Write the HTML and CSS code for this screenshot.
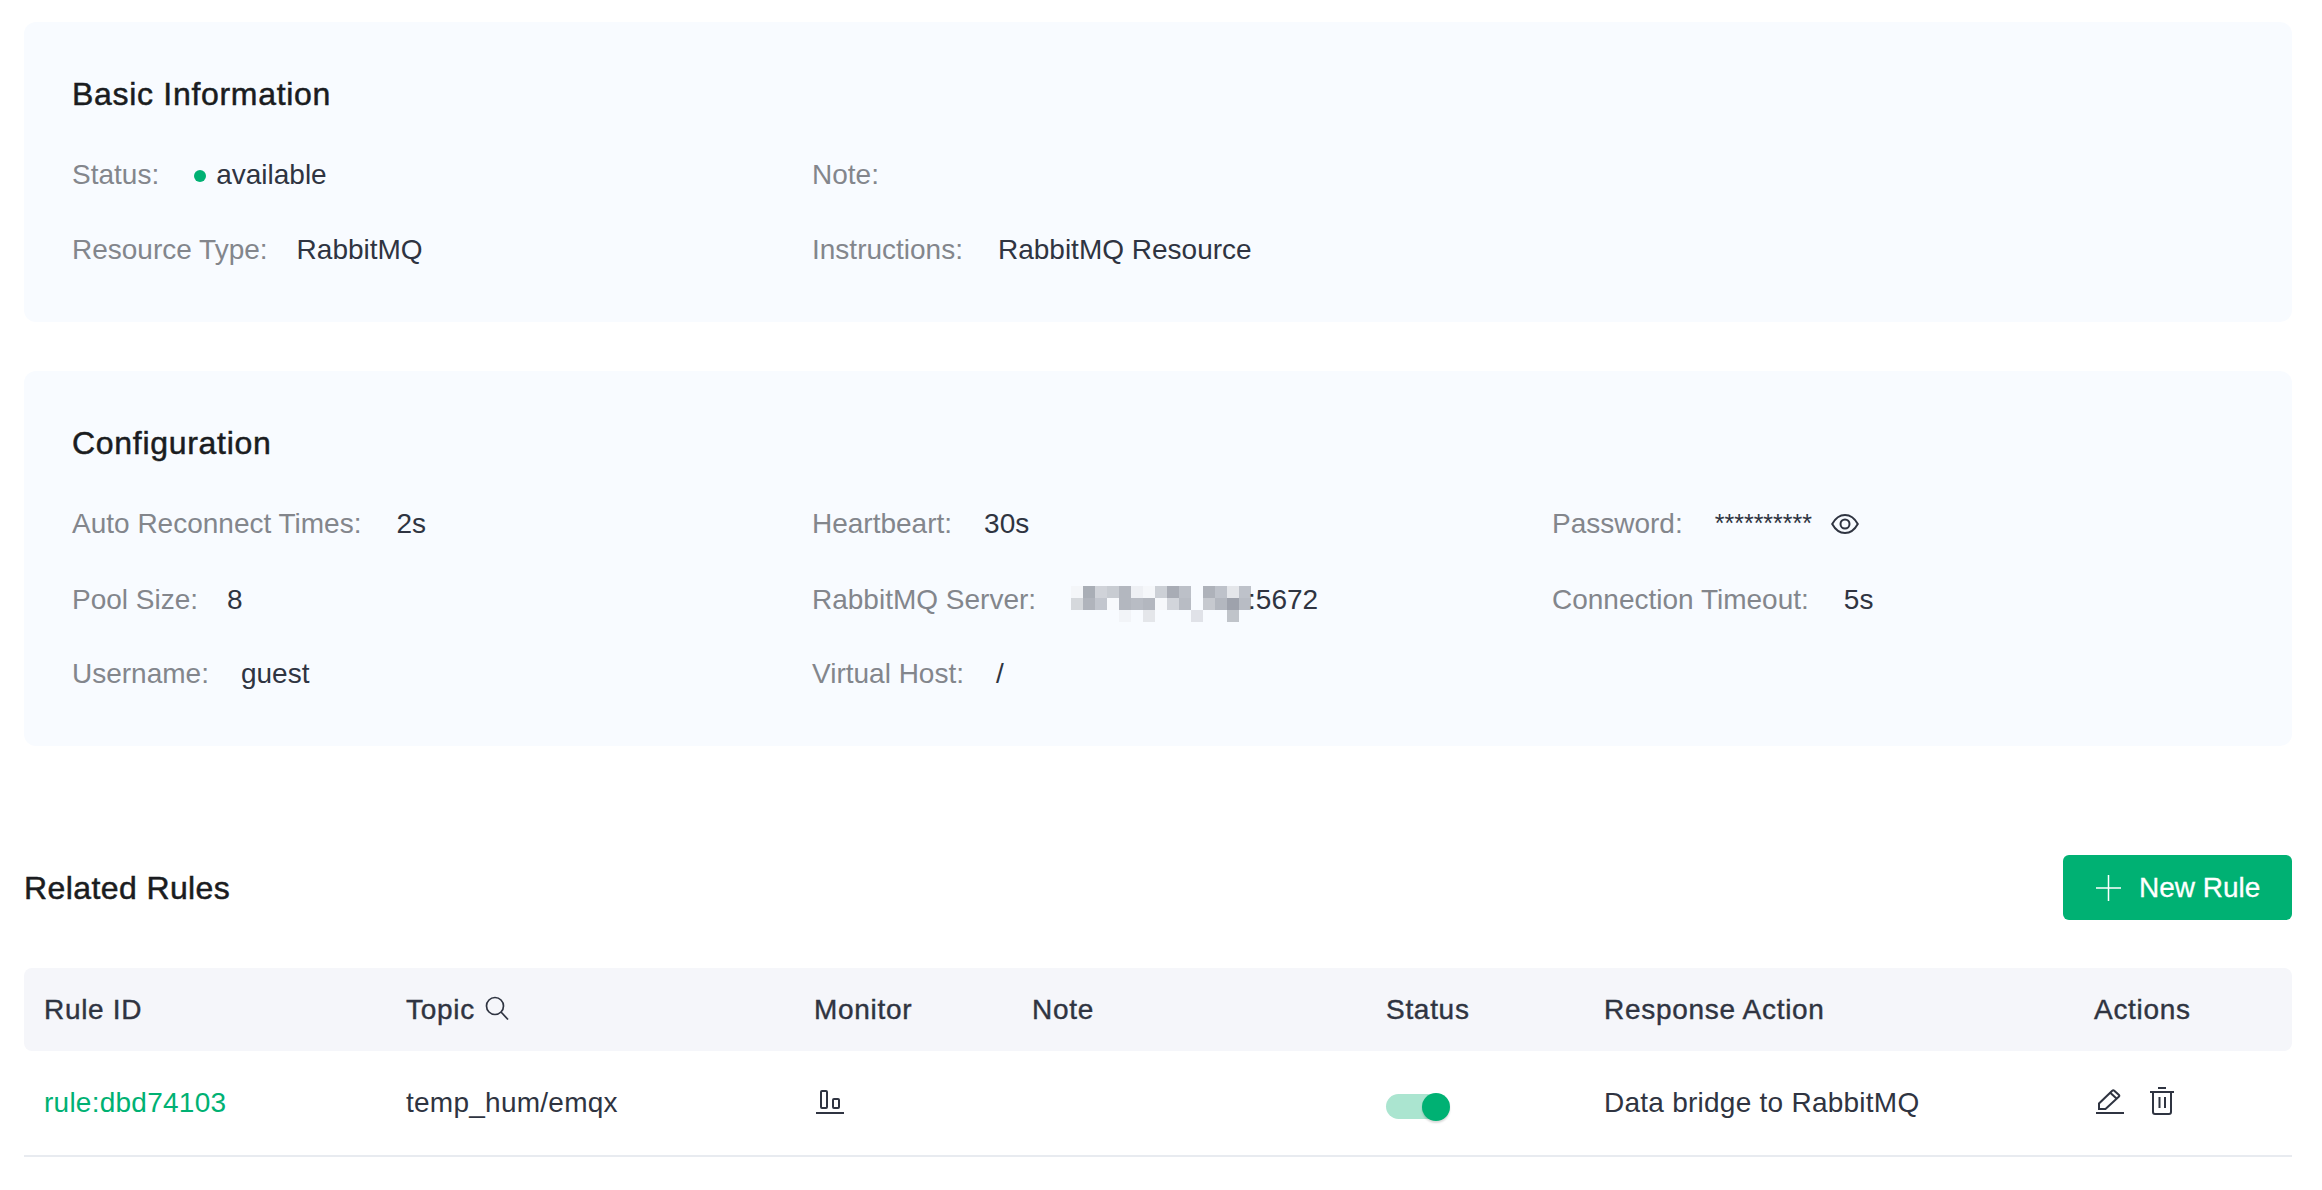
FILE: index.html
```html
<!DOCTYPE html>
<html lang="en">
<head>
  <meta charset="UTF-8">
  <title>Resource Detail</title>
  <link rel="stylesheet" href="styles.css">
</head>
<body>
  <section class="card card-basic">
    <h2 class="card-title">Basic Information</h2>
    <div class="info-grid">
      <div class="info-item"><span class="info-label label-wide">Status:</span><span class="info-value"><i class="status-dot"></i>available</span></div>
      <div class="info-item"><span class="info-label">Note:</span></div>
      <div class="info-item info-empty"></div>
      <div class="info-item"><span class="info-label label-narrow">Resource Type:</span><span class="info-value">RabbitMQ</span></div>
      <div class="info-item"><span class="info-label label-wide">Instructions:</span><span class="info-value">RabbitMQ Resource</span></div>
    </div>
  </section>

  <section class="card card-config">
    <h2 class="card-title">Configuration</h2>
    <div class="info-grid">
      <div class="info-item"><span class="info-label label-wide">Auto Reconnect Times:</span><span class="info-value">2s</span></div>
      <div class="info-item"><span class="info-label">Heartbeart:</span><span class="info-value">30s</span></div>
      <div class="info-item">
        <span class="info-label">Password:</span>
        <span class="info-value password">**********</span>
        <svg class="icon-eye" width="28" height="20" viewBox="0 0 28 20" fill="none" stroke="#2f3441" stroke-width="2">
          <path d="M1.200 10C4.500 4 9 1 14 1s9.500 3 12.800 9c-3.300 6-7.800 9-12.800 9S4.500 16 1.200 10z"/>
          <circle cx="14" cy="10" r="4.500"/>
        </svg>
      </div>
      <div class="info-item"><span class="info-label label-narrow">Pool Size:</span><span class="info-value">8</span></div>
      <div class="info-item">
        <span class="info-label">RabbitMQ Server:</span>
        <span class="info-value server">
          <svg class="mosaic" width="180" height="36" viewBox="0 0 15 3" shape-rendering="crispEdges">
            <rect x="0" y="0" width="1" height="1" fill="#f4f6f9"/><rect x="1" y="0" width="1" height="1" fill="#a9aeb6"/><rect x="2" y="0" width="1" height="1" fill="#d0d3d9"/><rect x="3" y="0" width="1" height="1" fill="#c8ccd2"/><rect x="4" y="0" width="1" height="1" fill="#b3b7bf"/><rect x="5" y="0" width="1" height="1" fill="#eef0f4"/><rect x="6" y="0" width="1" height="1" fill="#f5f7fa"/><rect x="7" y="0" width="1" height="1" fill="#ccd0d6"/><rect x="8" y="0" width="1" height="1" fill="#a8acb5"/><rect x="9" y="0" width="1" height="1" fill="#bcc0c8"/><rect x="11" y="0" width="1" height="1" fill="#aeb2ba"/><rect x="12" y="0" width="1" height="1" fill="#bec2ca"/><rect x="13" y="0" width="1" height="1" fill="#e4e6ea"/><rect x="14" y="0" width="1" height="1" fill="#bec2ca"/>
            <rect x="0" y="1" width="1" height="1" fill="#d5d8dc"/><rect x="1" y="1" width="1" height="1" fill="#b0b4bc"/><rect x="2" y="1" width="1" height="1" fill="#c2c6ce"/><rect x="3" y="1" width="1" height="1" fill="#f7f9fc"/><rect x="4" y="1" width="1" height="1" fill="#b3b7bf"/><rect x="5" y="1" width="1" height="1" fill="#b8bcc4"/><rect x="6" y="1" width="1" height="1" fill="#b3b7bf"/><rect x="7" y="1" width="1" height="1" fill="#f6f8fb"/><rect x="8" y="1" width="1" height="1" fill="#d2d5db"/><rect x="9" y="1" width="1" height="1" fill="#b8bcc4"/><rect x="11" y="1" width="1" height="1" fill="#c6c9cf"/><rect x="12" y="1" width="1" height="1" fill="#b3b7bf"/><rect x="13" y="1" width="1" height="1" fill="#9ea2ac"/><rect x="14" y="1" width="1" height="1" fill="#b8bcc4"/>
            <rect x="4" y="2" width="1" height="1" fill="#f2f4f8"/><rect x="6" y="2" width="1" height="1" fill="#e4e6ea"/><rect x="10" y="2" width="1" height="1" fill="#e0e2e8"/><rect x="13" y="2" width="1" height="1" fill="#c0c4ca"/>
          </svg>:5672
        </span>
      </div>
      <div class="info-item"><span class="info-label label-wide">Connection Timeout:</span><span class="info-value">5s</span></div>
      <div class="info-item"><span class="info-label">Username:</span><span class="info-value">guest</span></div>
      <div class="info-item"><span class="info-label">Virtual Host:</span><span class="info-value">/</span></div>
    </div>
  </section>

  <div class="section-head">
    <h2 class="section-title">Related Rules</h2>
    <button class="btn-primary" type="button">
      <svg width="25" height="26" viewBox="0 0 25 26" stroke="#fff" stroke-width="1.500"><path d="M12.500 0v26M0 13h25"/></svg>
      New Rule
    </button>
  </div>

  <table class="rules">
    <colgroup>
      <col class="col-id"><col class="col-topic"><col class="col-monitor"><col class="col-note"><col class="col-status"><col class="col-response"><col class="col-actions">
    </colgroup>
    <thead>
      <tr>
        <th>Rule ID</th>
        <th>
          Topic
          <svg class="icon-search" width="24" height="24" viewBox="0 0 24 24" fill="none" stroke="#2f3441" stroke-width="1.700">
            <circle cx="10" cy="10" r="8.500"/><path d="M16 16l7 7.500"/>
          </svg>
        </th>
        <th>Monitor</th>
        <th>Note</th>
        <th>Status</th>
        <th>Response Action</th>
        <th>Actions</th>
      </tr>
    </thead>
    <tbody>
      <tr>
        <td><a class="rule-link" href="#">rule:dbd74103</a></td>
        <td>temp_hum/emqx</td>
        <td>
          <svg class="icon-monitor" width="28" height="24" viewBox="0 0 28 24" fill="none" stroke="#2f3441" stroke-width="2">
            <rect x="5" y="1" width="6" height="17" rx="1"/><rect x="17" y="9" width="6" height="9" rx="1"/><path d="M0 23h28"/>
          </svg>
        </td>
        <td></td>
        <td><span class="switch"><i class="switch-knob"></i></span></td>
        <td>Data bridge to RabbitMQ</td>
        <td>
          <div class="row-actions">
            <svg width="28" height="26" viewBox="0 0 28 26" fill="none" stroke="#2f3441" stroke-width="2">
              <path d="M3 21v-5.500L16.500 2.500a1 1 0 0 1 1.500 0l5 4.500a1 1 0 0 1 0 1.500L9.500 21z"/><path d="M14 4.500l6.500 6"/><path d="M0 25h28"/>
            </svg>
            <svg width="24" height="28" viewBox="0 0 24 28" fill="none" stroke="#2f3441" stroke-width="2">
              <path d="M8 1h8M0 5h24M3 5v20a2 2 0 0 0 2 2h14a2 2 0 0 0 2-2V5M9.500 10v11M15 10v11"/>
            </svg>
          </div>
        </td>
      </tr>
    </tbody>
  </table>
</body>
</html>
```

FILE: styles.css
```css
/* page */
body {
  margin: 0;
  padding: 22px 30px 0 24px;
  background: #fff;
  color: #2f3441;
  font-family: "Liberation Sans", Arial, sans-serif;
  font-size: 28px;
}

/* info cards */
.card {
  box-sizing: border-box;
  padding: 56px 0 0 48px;
  background: #f8fbff;
  border-radius: 12px;
}

.card-basic {
  height: 300px;
  margin-bottom: 49px;
}

.card-config {
  height: 375px;
}

.card-config .info-grid {
  grid-template-rows: 75px 77px 72px;
}

.card-title {
  margin: 0 0 27px;
  color: #1a1c20;
  font-size: 32px;
  font-weight: 500;
  line-height: 32px;
  letter-spacing: 0.7px;
  -webkit-text-stroke: 0.5px #1a1c20;
}

.info-grid {
  display: grid;
  grid-template-columns: repeat(3, 740px);
  grid-auto-rows: 75px;
}

.info-item {
  display: flex;
  align-items: center;
}

.info-label {
  margin-right: 32px;
  color: #83868c;
}

.label-wide {
  margin-right: 35px;
}

.label-narrow {
  margin-right: 29px;
}

.password {
  font-size: 25px;
}

.icon-eye {
  margin-left: 19px;
}

.server {
  display: flex;
  align-items: center;
}

.mosaic {
  margin: 8px -3px 0 3px;
}

.status-dot {
  display: inline-block;
  width: 12px;
  height: 12px;
  margin-right: 10px;
  border-radius: 50%;
  background: #00b173;
  vertical-align: 2px;
}

/* related rules */
.section-head {
  display: flex;
  align-items: center;
  justify-content: space-between;
  margin-top: 109px;
  height: 65px;
}

.section-title {
  margin: 2px 0 0;
  color: #1a1c20;
  font-size: 32px;
  font-weight: 500;
  letter-spacing: 0.4px;
  -webkit-text-stroke: 0.5px #1a1c20;
}

.btn-primary {
  display: flex;
  align-items: center;
  gap: 18px;
  width: 229px;
  height: 65px;
  padding: 0 0 0 33px;
  border: none;
  border-radius: 6px;
  background: #00b173;
  color: #fff;
  font-family: inherit;
  font-size: 28px;
  font-weight: 500;
  -webkit-text-stroke: 0.3px #fff;
}

.rules {
  width: 2268px;
  margin-top: 48px;
  border-collapse: separate;
  border-spacing: 0;
  table-layout: fixed;
}

.col-id { width: 362px; }
.col-topic { width: 408px; }
.col-monitor { width: 218px; }
.col-note { width: 354px; }
.col-status { width: 218px; }
.col-response { width: 490px; }
.col-actions { width: 218px; }

.rules th {
  height: 83px;
  padding: 0 0 0 20px;
  background: #f5f6fa;
  font-weight: 500;
  letter-spacing: 0.7px;
  text-align: left;
  -webkit-text-stroke: 0.4px #2f3441;
}

.rules th:first-child {
  border-radius: 8px 0 0 8px;
}

.rules th:last-child {
  border-radius: 0 8px 8px 0;
}

.rules td {
  height: 104px;
  padding: 0 0 0 20px;
  border-bottom: 2px solid #e8ebf0;
  letter-spacing: 0.25px;
}

.icon-search {
  margin-left: 2px;
  vertical-align: -1px;
}

.rule-link {
  color: #00b173;
  text-decoration: none;
}

.icon-monitor {
  display: block;
  margin: -2px 0 0 2px;
}

.switch {
  position: relative;
  display: block;
  width: 60px;
  height: 25px;
  margin-top: 6px;
  border-radius: 13px;
  background: #abe5d0;
}

.switch-knob {
  position: absolute;
  top: -1px;
  left: 36px;
  width: 28px;
  height: 28px;
  border-radius: 50%;
  background: #00b173;
  box-shadow: 0 2px 2px rgba(0, 0, 0, 0.15);
}

.row-actions {
  display: flex;
  gap: 26px;
  align-items: center;
  margin: -4px 0 0 2px;
}
```
